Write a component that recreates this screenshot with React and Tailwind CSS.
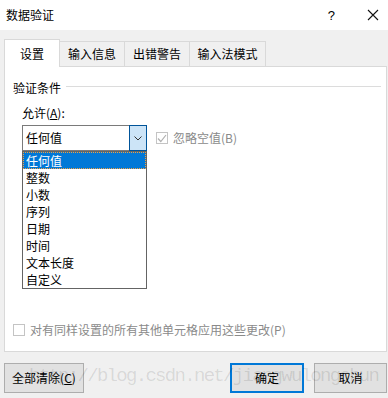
import React from "react";

const items = ["任何值", "整数", "小数", "序列", "日期", "时间", "文本长度", "自定义"];

const tabs = [
  { label: "输入信息", w: "w-[66px]" },
  { label: "出错警告", w: "w-[66px]" },
  { label: "输入法模式", w: "w-[77px]" },
];

const App = () => {
  return (
    <div className="relative w-[388px] h-[398px] overflow-hidden bg-[#f0f0f0] text-[12px] text-black font-['Noto_Sans_CJK_SC','Noto_Sans',sans-serif]">
      {/* title bar */}
      <div className="h-[30px] bg-white flex items-center pl-[6px]">
        <span className="leading-none">数据验证</span>
        <span className="ml-auto text-[13px] leading-none mr-[32px] font-['Liberation_Sans',sans-serif]">?</span>
        <svg width="12" height="12" viewBox="0 0 12 12" className="mr-[9px]">
          <path d="M1 1 L11 11 M11 1 L1 11" stroke="#111" strokeWidth="1.1" fill="none" />
        </svg>
      </div>

      <div className="pl-[4px] pr-[1px] pt-[9px]">
        {/* tabs */}
        <div className="flex items-end h-[27px]">
          <div className="relative z-10 w-[56px] h-[28px] -mb-px bg-white border border-b-0 border-[#d9d9d9] flex items-center justify-center pt-[1px]">
            设置
          </div>
          {tabs.map((t) => (
            <div
              key={t.label}
              className={`${t.w} -ml-px h-[25px] border border-b-0 border-[#d9d9d9] bg-[#f0f0f0] flex items-center justify-center`}
            >
              {t.label}
            </div>
          ))}
        </div>

        {/* panel */}
        <div className="h-[286px] bg-white border border-[#d9d9d9] flex flex-col">
          <div className="flex items-center pl-[8px] pr-[5px] mt-[12px] h-[17px]">
            <span>验证条件</span>
            <div className="flex-1 h-px bg-[#dcdcdc] ml-[5px] -mt-[2px]" />
          </div>

          <div className="pl-[17px] mt-[8px] h-[17px] leading-[17px]">
            允许(<span className="underline">A</span>):
          </div>

          <div className="pl-[17px] mt-[4px] flex items-center">
            <div className="relative">
              <div className="w-[125px] h-[26px] border border-[#7a7a7a] bg-white flex items-center">
                <span className="pl-[3px] flex-1">任何值</span>
                <div className="w-[18px] h-[26px] -mr-px bg-[#cce4f7] border border-[#005499] flex items-center justify-center">
                  <svg width="8" height="5" viewBox="0 0 8 5">
                    <path d="M0.5 0.5 L4 4 L7.5 0.5" stroke="#333" strokeWidth="1" fill="none" />
                  </svg>
                </div>
              </div>
              {/* dropdown list */}
              <div className="absolute left-0 top-[26px] z-20 w-[125px] border border-[#646464] bg-white">
                {items.map((it, i) => (
                  <div
                    key={it}
                    className={
                      i === 0
                        ? "h-[17px] leading-[15px] pl-[2px] bg-[#0078d7] text-white border border-dotted border-[#f0a040]"
                        : "h-[17px] leading-[17px] pl-[3px]"
                    }
                  >
                    {it}
                  </div>
                ))}
              </div>
            </div>
            <div className="ml-[9px] flex items-center text-[#8a8a8a]">
              <div className="w-[12px] h-[12px] border border-[#c4c4c4] flex items-center justify-center">
                <svg width="10" height="9" viewBox="0 0 10 9">
                  <path d="M1 4.5 L3.8 7.5 L9 1" stroke="#b0b0b0" strokeWidth="1.2" fill="none" />
                </svg>
              </div>
              <span className="ml-[5px]">忽略空值(B)</span>
            </div>
          </div>

          <div className="mt-auto mb-[13px] pl-[8px] flex items-center h-[16px] text-[#8a8a8a]">
            <div className="w-[12px] h-[12px] border border-[#c4c4c4] bg-white" />
            <span className="ml-[5px]">对有同样设置的所有其他单元格应用这些更改(P)</span>
          </div>
        </div>

        {/* buttons */}
        <div className="mt-[11px] flex items-center">
          <button className="w-[80px] h-[30px] bg-[#e1e1e1] border border-[#adadad] flex items-center justify-center">
            全部清除(<span className="underline">C</span>)
          </button>
          <button className="ml-auto w-[74px] h-[30px] bg-[#e1e1e1] border-2 border-[#0078d7] flex items-center justify-center">
            确定
          </button>
          <button className="ml-[10px] w-[73px] h-[30px] bg-[#e1e1e1] border border-[#adadad] flex items-center justify-center">
            取消
          </button>
        </div>
      </div>

      {/* watermark */}
      <div className="absolute left-[29px] top-[365px] text-[19px] leading-[22px] tracking-[-1.7px] text-black/[0.11] font-['Liberation_Mono',monospace] pointer-events-none whitespace-nowrap">
        http://blog.csdn.net/jiangwulongchun
      </div>
    </div>
  );
};

export default App;
